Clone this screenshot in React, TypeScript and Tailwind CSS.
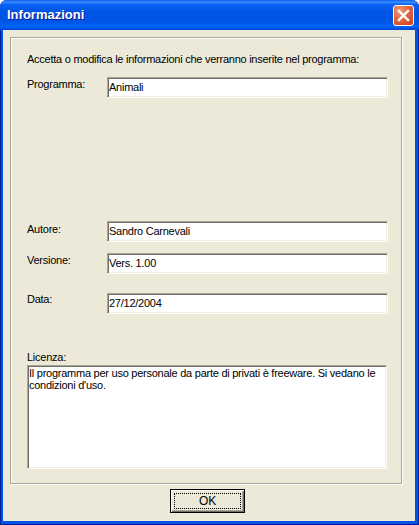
import React from "react";

const sunken =
  "border border-t-[#ACA899] border-l-[#ACA899] border-b-white border-r-white shadow-[inset_1px_1px_0_#716F64,inset_-1px_-1px_0_#F1EFE2] bg-white";

function Field({ label, value, labelPad }: { label: string; value: string; labelPad: string }) {
  return (
    <div className="flex items-start">
      <div className={`w-[80px] leading-[13px] ${labelPad}`}>{label}</div>
      <div className={`w-[281px] h-[21px] flex items-center pl-[1px] leading-[13px] ${sunken}`}>{value}</div>
    </div>
  );
}

export default function App() {
  return (
    <div className="w-[419px] h-[525px] bg-white text-[11px] text-black" style={{ fontFamily: "'Liberation Sans', Arial, sans-serif" }}>
      <div className="h-full flex flex-col rounded-t-[7px] overflow-hidden bg-[#0054E3] shadow-[inset_1px_0_0_#001EA0,inset_-1px_-1px_0_#001EA0]">
        {/* title bar */}
        <div className="h-[30px] flex items-center justify-between pl-[7px] pr-[5px] bg-[linear-gradient(180deg,#0A5CF0_0%,#3D8EFF_7%,#0A62F5_15%,#0054E3_40%,#0056E6_75%,#0064FA_88%,#0044D0_100%)]">
          <span className="text-white font-bold text-[13px] [text-shadow:1px_1px_0_#0A1E8C]">Informazioni</span>
          <div className="w-[21px] h-[21px] rounded-[3px] border border-white flex items-center justify-center bg-[radial-gradient(circle_at_30%_25%,#F39A7C_0%,#E2653F_45%,#C8401C_100%)]">
            <svg width="13" height="13" viewBox="0 0 13 13">
              <path d="M2 2 L11 11 M11 2 L2 11" stroke="white" strokeWidth="2.4" strokeLinecap="square" />
            </svg>
          </div>
        </div>

        {/* client area */}
        <div className="flex-1 ml-[3px] mr-[4px] mb-[4px] bg-[#ECE9D8] flex flex-col tracking-[-0.25px]">
          <div className="mt-[7px] ml-[7px] w-[392px] h-[447px] border border-[#ACA899] shadow-[inset_1px_1px_0_white,1px_1px_0_white] pt-[15px] pl-[16px] flex flex-col">
            <div className="leading-[13px]">Accetta o modifica le informazioni che verranno inserite nel programma:</div>
            <div className="mt-[11px]">
              <Field label="Programma:" value="Animali" labelPad="pt-[1px]" />
            </div>
            <div className="mt-[123px]">
              <Field label="Autore:" value="Sandro Carnevali" labelPad="pt-[2px]" />
            </div>
            <div className="mt-[11px]">
              <Field label="Versione:" value="Vers. 1.00" labelPad="pt-[1px]" />
            </div>
            <div className="mt-[19px]">
              <Field label="Data:" value="27/12/2004" labelPad="pt-0" />
            </div>
            <div className="mt-[37px] leading-[13px]">Licenza:</div>
            <div className={`mt-[1px] w-[360px] h-[104px] pt-[1px] pl-[1px] leading-[12px] whitespace-nowrap ${sunken}`}>
              Il programma per uso personale da parte di privati è freeware. Si vedano le
              <br />
              condizioni d'uso.
            </div>
          </div>

          <div className="mt-[5px] pl-[167px]">
            <div className="w-[75px] h-[24px] border border-black bg-[#ECE9D8] shadow-[inset_1px_1px_0_white,inset_-1px_-1px_0_#716F64,inset_-2px_-2px_0_#ACA899] p-[3px]">
              <div className="w-full h-full border border-dotted border-black flex items-center justify-center leading-[13px] text-[12px]">
                OK
              </div>
            </div>
          </div>
        </div>
      </div>
    </div>
  );
}
